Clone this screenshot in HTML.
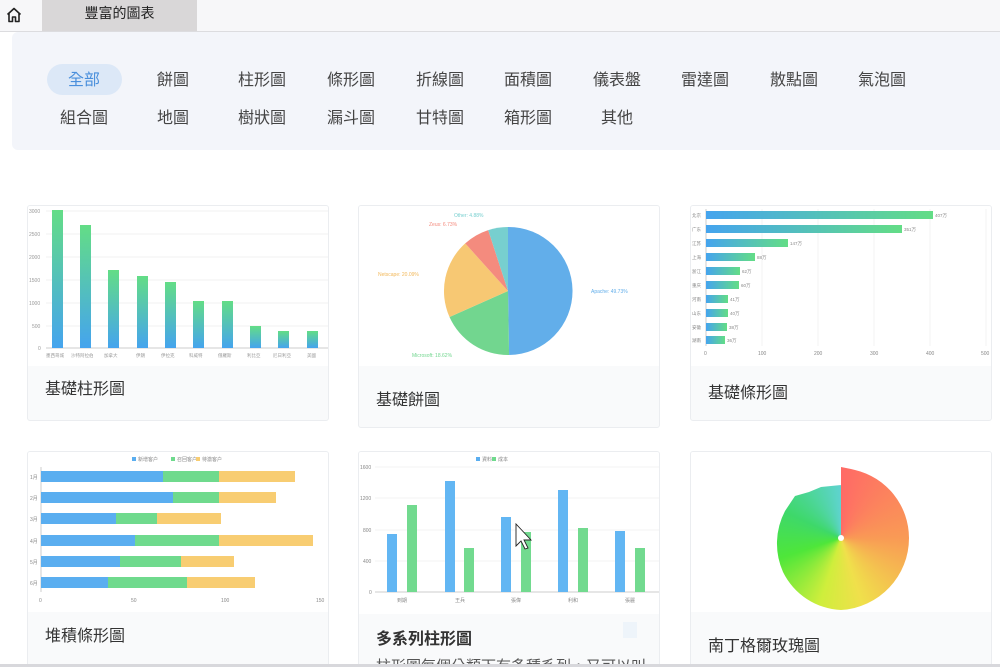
<!DOCTYPE html>
<html><head><meta charset="utf-8">
<style>
*{margin:0;padding:0;box-sizing:border-box}
body{width:1000px;height:667px;overflow:hidden;background:#fff;font-family:"Liberation Sans","Noto Sans CJK TC",sans-serif;position:relative;color:#333}
.top{position:absolute;left:0;top:0;width:1000px;height:32px;background:#f7f7f9;border-bottom:1px solid #dcdcdf}
.tab{position:absolute;left:42px;top:0;width:155px;height:31px;background:#d9d7d8;font-size:14px;line-height:27px;text-align:center;color:#222}
.panel{position:absolute;left:12px;top:32px;width:1000px;height:118px;background:#f3f5fa;border-radius:6px}
.f{position:absolute;font-size:16px;color:#444;transform:translateX(-50%);white-space:nowrap;top:0}
.pill{position:absolute;left:47px;top:64px;width:75px;height:31px;border-radius:16px;background:#dce8f7}
.card{position:absolute;border:1px solid #ebedf0;border-radius:3px;background:#f9fafb;overflow:hidden}
.card svg{position:absolute;left:0;top:0;background:#fff}
.t{position:absolute;font-size:16px;color:#333}
</style></head><body>
<div class="top">
<svg style="position:absolute;left:5px;top:6px" width="18" height="18" viewBox="0 0 18 18" fill="none" stroke="#222" stroke-width="1.6" stroke-linejoin="round"><path d="M2.5 8.5 9 2.5 15.5 8.5M4 7.5V15.5H7.5V11H10.5V15.5H14V7.5"/></svg>
<div class="tab">豐富的圖表</div>
</div>
<div class="panel"></div>
<div class="pill"></div>
<div style="position:absolute;left:0;top:66px;width:1000px">
<span class="f" style="left:84px;color:#4a8fdc">全部</span><span class="f" style="left:173px">餅圖</span><span class="f" style="left:262px">柱形圖</span><span class="f" style="left:351px">條形圖</span><span class="f" style="left:440px">折線圖</span><span class="f" style="left:528px">面積圖</span><span class="f" style="left:617px">儀表盤</span><span class="f" style="left:705px">雷達圖</span><span class="f" style="left:794px">散點圖</span><span class="f" style="left:882px">氣泡圖</span>
</div>
<div style="position:absolute;left:0;top:104px;width:1000px">
<span class="f" style="left:84px">組合圖</span><span class="f" style="left:173px">地圖</span><span class="f" style="left:262px">樹狀圖</span><span class="f" style="left:351px">漏斗圖</span><span class="f" style="left:440px">甘特圖</span><span class="f" style="left:528px">箱形圖</span><span class="f" style="left:617px">其他</span>
</div>

<svg width="0" height="0" style="position:absolute"><defs>
<linearGradient id="gv" x1="0" y1="0" x2="0" y2="1"><stop offset="0" stop-color="#63dd86"/><stop offset="1" stop-color="#45a4ee"/></linearGradient>
<linearGradient id="gh" x1="0" y1="0" x2="1" y2="0"><stop offset="0" stop-color="#45a4ee"/><stop offset="1" stop-color="#63dd86"/></linearGradient>
</defs></svg>

<!-- card1 -->
<div class="card" style="left:27px;top:205px;width:302px;height:216px">
<svg width="302" height="160" font-size="5" fill="#999">
<g stroke="#f0f0f0"><line x1="18" y1="5" x2="300" y2="5"/><line x1="18" y1="28" x2="300" y2="28"/><line x1="18" y1="51" x2="300" y2="51"/><line x1="18" y1="74" x2="300" y2="74"/><line x1="18" y1="97" x2="300" y2="97"/><line x1="18" y1="120" x2="300" y2="120"/></g>
<line x1="18" y1="142" x2="300" y2="142" stroke="#ccc"/>
<text x="1" y="7">3000</text><text x="1" y="30">2500</text><text x="1" y="53">2000</text><text x="1" y="76">1500</text><text x="1" y="99">1000</text><text x="4" y="122">500</text><text x="10" y="144">0</text>
<g fill="url(#gv)"><rect x="24" y="4" width="11" height="138"/><rect x="52" y="19" width="11" height="123"/><rect x="80" y="64" width="11" height="78"/><rect x="109" y="70" width="11" height="72"/><rect x="137" y="76" width="11" height="66"/><rect x="165" y="95" width="11" height="47"/><rect x="194" y="95" width="11" height="47"/><rect x="222" y="120" width="11" height="22"/><rect x="250" y="125" width="11" height="17"/><rect x="279" y="125" width="11" height="17"/></g>
<g font-size="4.5"><text x="18" y="151">墨西哥城</text><text x="43" y="151">沙特阿拉伯</text><text x="76" y="151">加拿大</text><text x="108" y="151">伊朗</text><text x="133" y="151">伊拉克</text><text x="161" y="151">科威特</text><text x="190" y="151">俄羅斯</text><text x="219" y="151">利比亞</text><text x="245" y="151">尼日利亞</text><text x="279" y="151">美國</text></g>
</svg>
<div class="t" style="left:17px;top:169px">基礎柱形圖</div>
</div>

<!-- card2 -->
<div class="card" style="left:358px;top:205px;width:302px;height:223px">
<svg width="302" height="160" font-size="5">
<g transform="translate(149,85)">
<path d="M0 0V-64A64 64 0 0 1 1.1 64Z" fill="#62aeea"/>
<path d="M0 0L1.1 64A64 64 0 0 1 -58.5 26Z" fill="#72d68f"/>
<path d="M0 0L-58.5 26A64 64 0 0 1 -42.8 -47.6Z" fill="#f7c873"/>
<path d="M0 0L-42.8 -47.6A64 64 0 0 1 -19.8 -60.9Z" fill="#f48b7e"/>
<path d="M0 0L-19.8 -60.9A64 64 0 0 1 0 -64Z" fill="#77cfcf"/>
</g>
<text x="232" y="87" fill="#62aeea">Apache: 49.73%</text>
<text x="53" y="151" fill="#72d68f">Microsoft: 18.62%</text>
<text x="19" y="70" fill="#f2b85a">Netscape: 20.09%</text>
<text x="70" y="20" fill="#f48b7e">Zeus: 6.73%</text>
<text x="95" y="11" fill="#77cfcf">Other: 4.88%</text>
</svg>
<div class="t" style="left:17px;top:180px">基礎餅圖</div>
</div>

<!-- card3 -->
<div class="card" style="left:690px;top:205px;width:302px;height:216px">
<svg width="302" height="160" font-size="5" fill="#888">
<g stroke="#f3f3f3"><line x1="71" y1="3" x2="71" y2="140"/><line x1="127" y1="3" x2="127" y2="140"/><line x1="183" y1="3" x2="183" y2="140"/><line x1="239" y1="3" x2="239" y2="140"/><line x1="295" y1="3" x2="295" y2="140"/></g>
<line x1="15" y1="3" x2="15" y2="140" stroke="#ccc"/>
<g fill="url(#gh)"><rect x="15" y="5" width="227" height="8"/><rect x="15" y="19" width="196" height="8"/><rect x="15" y="33" width="82" height="8"/><rect x="15" y="47" width="49" height="8"/><rect x="15" y="61" width="34" height="8"/><rect x="15" y="75" width="33" height="8"/><rect x="15" y="89" width="22" height="8"/><rect x="15" y="103" width="22" height="8"/><rect x="15" y="117" width="21" height="8"/><rect x="15" y="130" width="19" height="8"/></g>
<g font-size="4.5"><text x="1" y="11">北京</text><text x="1" y="25">广东</text><text x="1" y="39">江苏</text><text x="1" y="53">上海</text><text x="1" y="67">浙江</text><text x="1" y="81">重庆</text><text x="1" y="95">河南</text><text x="1" y="109">山东</text><text x="1" y="123">安徽</text><text x="1" y="136">湖南</text>
<text x="244" y="11">407万</text><text x="213" y="25">351万</text><text x="99" y="39">147万</text><text x="66" y="53">88万</text><text x="51" y="67">62万</text><text x="50" y="81">60万</text><text x="39" y="95">41万</text><text x="39" y="109">40万</text><text x="38" y="123">38万</text><text x="36" y="136">36万</text></g>
<text x="13" y="149">0</text><text x="67" y="149">100</text><text x="123" y="149">200</text><text x="179" y="149">300</text><text x="235" y="149">400</text><text x="290" y="149">500</text>
</svg>
<div class="t" style="left:17px;top:173px">基礎條形圖</div>
</div>

<!-- card4 -->
<div class="card" style="left:27px;top:451px;width:302px;height:216px">
<svg width="302" height="160" font-size="5" fill="#888">
<rect x="104" y="5" width="4" height="4" fill="#5aaef0"/><text x="110" y="9">新增客户</text>
<rect x="143" y="5" width="4" height="4" fill="#6fda8d"/><text x="149" y="9">召回客户</text>
<rect x="168" y="5" width="4" height="4" fill="#f8cd72"/><text x="174" y="9">待激客户</text>
<line x1="13" y1="15" x2="13" y2="140" stroke="#ccc"/>
<g><rect x="13" y="19" width="122" height="11" fill="#5aaef0"/><rect x="135" y="19" width="56" height="11" fill="#6fda8d"/><rect x="191" y="19" width="76" height="11" fill="#f8cd72"/>
<rect x="13" y="40" width="132" height="11" fill="#5aaef0"/><rect x="145" y="40" width="46" height="11" fill="#6fda8d"/><rect x="191" y="40" width="57" height="11" fill="#f8cd72"/>
<rect x="13" y="61" width="75" height="11" fill="#5aaef0"/><rect x="88" y="61" width="41" height="11" fill="#6fda8d"/><rect x="129" y="61" width="64" height="11" fill="#f8cd72"/>
<rect x="13" y="83" width="94" height="11" fill="#5aaef0"/><rect x="107" y="83" width="84" height="11" fill="#6fda8d"/><rect x="191" y="83" width="94" height="11" fill="#f8cd72"/>
<rect x="13" y="104" width="79" height="11" fill="#5aaef0"/><rect x="92" y="104" width="61" height="11" fill="#6fda8d"/><rect x="153" y="104" width="53" height="11" fill="#f8cd72"/>
<rect x="13" y="125" width="67" height="11" fill="#5aaef0"/><rect x="80" y="125" width="79" height="11" fill="#6fda8d"/><rect x="159" y="125" width="68" height="11" fill="#f8cd72"/></g>
<text x="2" y="27">1月</text><text x="2" y="48">2月</text><text x="2" y="69">3月</text><text x="2" y="91">4月</text><text x="2" y="112">5月</text><text x="2" y="133">6月</text>
<text x="11" y="150">0</text><text x="103" y="150">50</text><text x="193" y="150">100</text><text x="288" y="150">150</text>
</svg>
<div class="t" style="left:17px;top:170px">堆積條形圖</div>
</div>

<!-- card5 -->
<div class="card" style="left:358px;top:451px;width:302px;height:216px">
<svg width="302" height="162" font-size="5" fill="#888">
<rect x="117" y="5" width="4" height="4" fill="#5aaef0"/><text x="123" y="9">資料</text>
<rect x="133" y="5" width="4" height="4" fill="#6fda8d"/><text x="139" y="9">成本</text>
<g stroke="#f3f3f3"><line x1="16" y1="15" x2="302" y2="15"/><line x1="16" y1="46" x2="302" y2="46"/><line x1="16" y1="78" x2="302" y2="78"/><line x1="16" y1="109" x2="302" y2="109"/></g>
<line x1="16" y1="140" x2="302" y2="140" stroke="#ccc"/>
<text x="1" y="17">1600</text><text x="1" y="48">1200</text><text x="4" y="80">800</text><text x="4" y="111">400</text><text x="10" y="142">0</text>
<g fill="#62b6f3"><rect x="28" y="82" width="10" height="58"/><rect x="86" y="29" width="10" height="111"/><rect x="142" y="65" width="10" height="75"/><rect x="199" y="38" width="10" height="102"/><rect x="256" y="79" width="10" height="61"/></g>
<g fill="#72da8f"><rect x="48" y="53" width="10" height="87"/><rect x="105" y="96" width="10" height="44"/><rect x="162" y="80" width="10" height="60"/><rect x="219" y="76" width="10" height="64"/><rect x="276" y="96" width="10" height="44"/></g>
<text x="38" y="150">到期</text><text x="96" y="150">王兵</text><text x="152" y="150">張偉</text><text x="209" y="150">利和</text><text x="266" y="150">張麗</text>
<path d="M157 72v22l5-5 4 8 3-1-4-8h7z" fill="#fff" stroke="#222" stroke-width="0.9"/>
</svg>
<div class="t" style="left:17px;top:173px;font-weight:bold">多系列柱形圖</div>
<div style="position:absolute;left:264px;top:170px;width:14px;height:16px;background:#eef4fa"></div>
<div class="t" style="left:17px;top:203px;color:#555;font-size:15px">柱形圖每個分類下有多種系列，又可以叫做</div>
</div>

<!-- card6 -->
<div class="card" style="left:690px;top:451px;width:302px;height:216px">
<svg width="302" height="160">
<defs><clipPath id="rc"><path d="M150 86V15L160 17L164 18A70 70 0 0 1 218 86A72 72 0 0 1 150 158A68 68 0 0 1 92 120A70 70 0 0 1 94 59L104 44L118 40L130 35L150 33Z"/></clipPath></defs>
<foreignObject x="80" y="13" width="140" height="148" clip-path="url(#rc)"><div xmlns="http://www.w3.org/1999/xhtml" style="width:140px;height:148px;background:conic-gradient(from 0deg at 70px 73px,#ff6a66,#f99a55 25%,#f0e04b 45%,#cfee3c 55%,#4ee63a 70%,#3ed86a 82%,#5fd3d0 100%)"></div></foreignObject>
<circle cx="150" cy="86" r="3" fill="#fff"/>
</svg>
<div class="t" style="left:17px;top:180px">南丁格爾玫瑰圖</div>
</div>
<div style="position:absolute;left:0;top:664px;width:1000px;height:3px;background:#d8d8dc"></div>
</body></html>
